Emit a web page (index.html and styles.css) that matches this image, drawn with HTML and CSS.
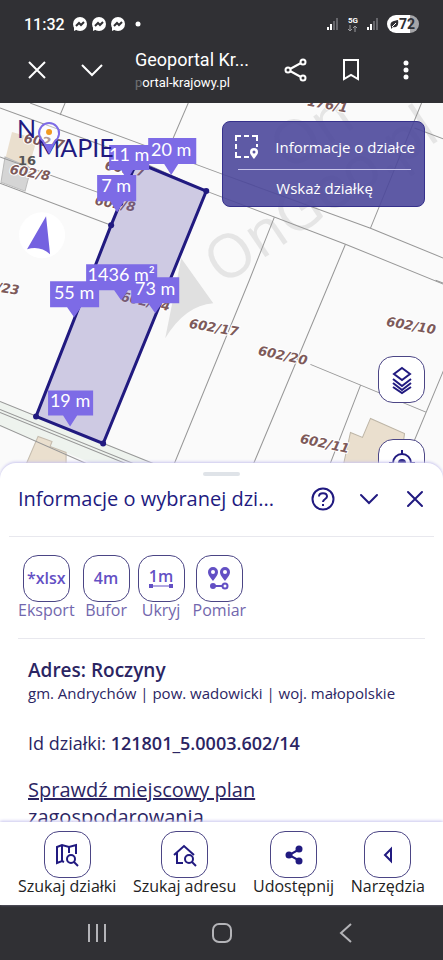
FILE: index.html
```
<!DOCTYPE html>
<html lang="pl">
<head>
  <meta charset="UTF-8">
  <meta name="viewport" content="width=device-width, initial-scale=1.0">
  <title>Geoportal Krajowy</title>
  <link rel="stylesheet" href="styles.css">
</head>
<body>
  <header class="top">
    <div class="status">
      <span class="clock">11:32</span>
      <svg class="chats" width="102" height="16" viewBox="0 0 102 16">
        <g fill="#fff">
          <circle cx="7" cy="8" r="7"/><path d="M1 11v4l4-2z"/>
          <circle cx="26" cy="8" r="7"/><path d="M20 11v4l4-2z"/>
          <circle cx="45" cy="8" r="7"/><path d="M39 11v4l4-2z"/>
          <circle cx="65" cy="8" r="2.500"/>
        </g>
        <g fill="none" stroke="#303034" stroke-width="2">
          <path d="M3 10l3-3 2 2 3-3"/><path d="M22 10l3-3 2 2 3-3"/><path d="M41 10l3-3 2 2 3-3"/>
        </g>
      </svg>
      <svg class="signal" width="12" height="14" viewBox="0 0 12 14">
        <path d="M1 10v3M4 7v6" stroke="#fff" stroke-width="2"/>
        <path d="M7 4v9M10 1v12" stroke="#66666b" stroke-width="2"/>
      </svg>
      <span class="net">5G<svg width="12" height="7" viewBox="0 0 12 7"><path d="M3 0v6M1 4l2 2 2-2M8 7V1M6 3l2-2 2 2" fill="none" stroke="#99999d"/></svg></span>
      <svg class="signal" width="12" height="14" viewBox="0 0 12 14">
        <path d="M1 10v3M4 7v6" stroke="#fff" stroke-width="2"/>
        <path d="M7 4v9M10 1v12" stroke="#66666b" stroke-width="2"/>
      </svg>
      <span class="battery"><svg width="9" height="10" viewBox="0 0 9 10"><path d="M1 8C-1 3 3 2 8 1c1 5-1 8-5 7L1 10z" fill="#303034"/><path d="M2 8l4-4" stroke="#fff"/></svg>72</span>
    </div>
    <div class="browser">
      <button class="plain" aria-label="Zamknij kartę"><svg width="24" height="24" viewBox="0 0 24 24"><path d="M4 4l16 16M20 4L4 20" stroke="#fff" stroke-width="2"/></svg></button>
      <button class="plain" aria-label="Zwiń kartę"><svg width="24" height="24" viewBox="0 0 24 24"><path d="M2 7l10 10L22 7" fill="none" stroke="#fff" stroke-width="2"/></svg></button>
      <div class="site">
        <div class="site-title">Geoportal Kr...</div>
        <div class="site-url"><span>p</span>ortal-krajowy.pl</div>
      </div>
      <button class="plain" aria-label="Udostępnij stronę"><svg width="24" height="24" viewBox="0 0 24 24" fill="none" stroke="#fff" stroke-width="2"><path d="M6 11l11-6M6 13l11 6"/><circle cx="4" cy="12" r="2.500"/><circle cx="19" cy="4" r="2.500"/><circle cx="19" cy="20" r="2.500"/></svg></button>
      <button class="plain" aria-label="Zakładka"><svg width="24" height="24" viewBox="0 0 24 24"><path d="M5 2h14v19l-7-4-7 4z" fill="none" stroke="#fff" stroke-width="2"/></svg></button>
      <button class="plain" aria-label="Menu"><svg width="24" height="24" viewBox="0 0 24 24" fill="#fff"><circle cx="12" cy="5" r="2.500"/><circle cx="12" cy="12" r="2.500"/><circle cx="12" cy="19" r="2.500"/></svg></button>
    </div>
  </header>

  <main class="map">
    <svg class="map-canvas" viewBox="0 103 443 375" preserveAspectRatio="xMinYMin slice">
      <rect y="103" width="443" height="375" fill="#fafafa"/>
      <!-- road -->
      <path d="M0 401L150 461L190 478H130L0 426z" fill="#eef3ee"/>
      <!-- watermark -->
      <g fill="#e0e0e0">
        <path d="M181 258L213 303Q185 305 165 338z"/>
        <text class="wm" x="222" y="286" font-size="60" transform="rotate(-34 222 286)">OnGeo.pl</text>
        <text class="wm" x="288" y="172" font-size="60" transform="rotate(-34 288 172)">On</text>
      </g>
      <!-- buildings -->
      <path d="M12 132L37 139L32 156L24 176L3 168z" fill="#eadfce"/>
      <path d="M5 157L31 168L25 191L1 182z" fill="#d5d5d5" stroke="#bbb"/>
      <path d="M20 478L38 436L52 441L50 446L66 452V478z" fill="#eadfce" stroke="#c5bcae"/>
      <path d="M340 478L350 432L362 437L370 418L404 433L398 478z" fill="#eadfce" stroke="#bdb5a6"/>
      <!-- parcel boundaries -->
      <g fill="none" stroke="#979797">
        <path d="M30 103L222 174L370 228L443 258M0 108L115 150L206 191L345 244L443 284M65 103L60 115M188 103L173 138M0 157L111 197M0 183L111 225"/>
        <path d="M274 217L249 280L168 478M345 244L330 280L247 478M421 103L370 228M414 128L443 139M435 280L443 283M310 364L426 412M443 370L398 478M360 385L324 478"/>
        <path d="M0 401L190 478M0 409L170 478M0 412L150 473M0 425L120 478"/>
      </g>
      <g class="parcel-no">
        <text x="24" y="138" transform="rotate(10 24 138)">602/7</text>
        <text x="10" y="169" transform="rotate(10 10 169)">602/8</text>
        <text x="105" y="165" transform="rotate(10 105 165)">602/7</text>
        <text x="95" y="200" transform="rotate(10 95 200)">602/8</text>
        <text x="-30" y="283" transform="rotate(8 -30 283)">602/23</text>
        <text x="121" y="296" transform="rotate(12 121 296)">602/14</text>
        <text x="189" y="323" transform="rotate(10 189 323)">602/17</text>
        <text x="258" y="350" transform="rotate(12 258 350)">602/20</text>
        <text x="386" y="321" transform="rotate(10 386 321)">602/10</text>
        <text x="300" y="438" transform="rotate(12 300 438)">602/11</text>
        <text x="307" y="101" transform="rotate(10 307 101)">176/1</text>
      </g>
      <text x="18" y="165" class="house-no">16</text>
      <!-- selected parcel -->
      <path d="M36 416L111 225L120 203L136 162L206 191L103 443z" fill="#6a5db0" fill-opacity=".3" stroke="#211a80" stroke-width="3"/>
      <g fill="#211a80">
        <circle cx="36" cy="416" r="3"/><circle cx="111" cy="225" r="3"/><circle cx="120" cy="203" r="3"/><circle cx="206" cy="191" r="3"/><circle cx="103" cy="443" r="3"/>
      </g>
      <!-- measurement labels -->
      <g fill="#7d6be6">
        <path d="M109 145H149V170H133L127 180L121 170H109z"/>
        <path d="M148 138H196V164H178L171 175L164 164H148z"/>
        <path d="M97 175H136V201H124L117 212L110 201H97z"/>
        <path d="M86 264H157V290H128L121 300L114 290H86z"/>
        <path d="M50 281H99V307H81L74 317L67 307H50z"/>
        <path d="M131 277H179V303H162L155 313L148 303H131z"/>
        <path d="M48 390H93V415H77L70 426L63 415H48z"/>
      </g>
      <g class="measure">
        <text x="129" y="161">11 m</text>
        <text x="171" y="156">20 m</text>
        <text x="116" y="192">7 m</text>
        <text x="121" y="281">1436 m²</text>
        <text x="74" y="299">55 m</text>
        <text x="155" y="295">73 m</text>
        <text x="70" y="407">19 m</text>
      </g>
      <!-- logo -->
      <g class="brand">
        <text x="17" y="138">N</text>
        <text x="37" y="157">MAPIE</text>
      </g>
      <path d="M49 152L43 141A10 10 0 1 1 55 141z" fill="#fff" fill-opacity=".4" stroke="#7d6be6" stroke-width="2"/>
      <path d="M44 144h10l-5 9z" fill="#7d6be6"/>
      <circle cx="49" cy="132" r="3" fill="#f39a1e"/>
      <!-- compass -->
      <circle cx="42" cy="235" r="23" fill="#fff"/>
      <path d="M46 216L50 254Q40 245 27 249z" fill="#7462e0"/>
    </svg>
    <div class="panel">
      <button class="panel-row">
        <svg width="26" height="26" viewBox="0 0 26 26"><path d="M2 7V2h5M10 2h5M18 2h5v5M2 10v5M2 18v5h5M10 23h5M23 10v3" fill="none" stroke="#fff" stroke-width="2"/><path d="M20 25C17 21 16 20 16 18a4 4 0 0 1 8 0c0 2-1 3-4 7z" fill="#fff"/><circle cx="20" cy="18" r="1.500" fill="#5b56a0"/></svg>
        Informacje o działce
      </button>
      <hr>
      <button class="panel-row">Wskaż działkę</button>
    </div>
    <div class="map-tools">
      <button class="tile" aria-label="Warstwy"><svg width="24" height="30" viewBox="0 0 24 30" fill="none" stroke="#211a80" stroke-width="2"><path d="M12 3l8 6-8 6-8-6z"/><path d="M3 14l9 7 9-7M3 18l9 7 9-7M3 22l9 6 9-6"/></svg></button>
      <button class="tile" aria-label="Moja lokalizacja"><svg width="26" height="26" viewBox="0 0 26 26"><circle cx="13" cy="13" r="9" fill="none" stroke="#211a80" stroke-width="2"/><circle cx="13" cy="13" r="4" fill="#211a80"/><path d="M13 0v5M13 21v5M0 13h5M21 13h5" stroke="#211a80" stroke-width="2"/></svg></button>
    </div>
  </main>

  <section class="sheet">
    <div class="grip"></div>
    <div class="sheet-head">
      <h1>Informacje o wybranej dzi...</h1>
      <button class="plain" aria-label="Pomoc"><svg width="24" height="24" viewBox="0 0 24 24" fill="none" stroke="#211a80" stroke-width="2"><circle cx="12" cy="12" r="10.500"/><path d="M8 9.500C8 5 16 5 16 9.500c0 2.500-4 2.500-4 5.500M12 17v2"/></svg></button>
      <button class="plain" aria-label="Zwiń"><svg width="24" height="24" viewBox="0 0 24 24"><path d="M4 8l8 8 8-8" fill="none" stroke="#211a80" stroke-width="2" stroke-linecap="round"/></svg></button>
      <button class="plain" aria-label="Zamknij"><svg width="24" height="24" viewBox="0 0 24 24"><path d="M5 5l14 14M19 5L5 19" stroke="#211a80" stroke-width="2" stroke-linecap="round"/></svg></button>
    </div>
    <div class="actions">
      <button class="action"><span class="tile">*xlsx</span>Eksport</button>
      <button class="action"><span class="tile">4m</span>Bufor</button>
      <button class="action"><span class="tile tile-stack">1m<svg width="24" height="5" viewBox="0 0 24 5"><path d="M2 2h20" stroke="#6350c4"/><path d="M0 0h4v4H0zM20 0h4v4h-4z" fill="#6350c4"/></svg></span>Ukryj</button>
      <button class="action"><span class="tile"><svg width="26" height="26" viewBox="0 0 26 26"><path d="M7 16C3 11 2 9 2 7a5 5 0 0 1 10 0c0 2-1 4-5 9zM19 16c-4-5-5-7-5-9a5 5 0 0 1 10 0c0 2-1 4-5 9z" fill="#6350c4"/><circle cx="7" cy="7" r="2" fill="#fff"/><circle cx="19" cy="7" r="2" fill="#fff"/><circle cx="7" cy="21" r="3" fill="#6350c4"/><path d="M8 21h9" stroke="#6350c4" stroke-width="2"/><circle cx="19" cy="21" r="2.500" fill="#fff" stroke="#6350c4" stroke-width="2"/></svg></span>Pomiar</button>
    </div>
    <div class="details">
      <h2>Adres: Roczyny</h2>
      <p class="region">gm. Andrychów | pow. wadowicki | woj. małopolskie</p>
      <p class="plot-id">Id działki: <b>121801_5.0003.602/14</b></p>
      <a class="plan" href="#">Sprawdź miejscowy plan<br>zagospodarowania</a>
    </div>
  </section>

  <nav class="tabs">
    <button class="action"><span class="tile"><svg width="26" height="26" viewBox="0 0 26 26" fill="none" stroke="#211a80" stroke-width="2"><path d="M10 20l-2-1-5 2V5l5-2 7 2 7-2v9M8 3v16M15 5v6"/><circle cx="17" cy="17" r="4"/><path d="M20 20l4 4"/></svg></span>Szukaj działki</button>
    <button class="action"><span class="tile"><svg width="26" height="26" viewBox="0 0 26 26" fill="none" stroke="#211a80" stroke-width="2"><path d="M2 13L12 4l10 9M5 11v10h6"/><circle cx="17" cy="17" r="4"/><path d="M20 20l4 4"/></svg></span>Szukaj adresu</button>
    <button class="action"><span class="tile"><svg width="26" height="26" viewBox="0 0 26 26"><path d="M19 7L8 13l11 6" fill="none" stroke="#211a80" stroke-width="2"/><g fill="#211a80"><circle cx="8" cy="13" r="3.500"/><circle cx="18" cy="7" r="3.500"/><circle cx="18" cy="19" r="3.500"/></g></svg></span>Udostępnij</button>
    <button class="action"><span class="tile"><svg width="26" height="26" viewBox="0 0 26 26"><path d="M16 7v12l-6-6z" fill="none" stroke="#211a80" stroke-width="2"/></svg></span>Narzędzia</button>
  </nav>

  <footer class="system">
    <button class="plain" aria-label="Ostatnie"><svg width="24" height="24" viewBox="0 0 24 24"><path d="M4 3v18M12 3v18M20 3v18" stroke="#b4b4b8" stroke-width="2"/></svg></button>
    <button class="plain" aria-label="Ekran główny"><svg width="24" height="24" viewBox="0 0 24 24"><rect x="3" y="3" width="18" height="18" rx="6" fill="none" stroke="#b4b4b8" stroke-width="2"/></svg></button>
    <button class="plain" aria-label="Wstecz"><svg width="24" height="24" viewBox="0 0 24 24"><path d="M17 3l-10 9 10 9" fill="none" stroke="#b4b4b8" stroke-width="2"/></svg></button>
  </footer>
</body>
</html>
```
FILE: styles.css
```
* {
  box-sizing: border-box;
}
body {
  margin: 0;
  height: 100vh;
  display: flex;
  flex-direction: column;
  overflow: hidden;
  font-family: "Open Sans", "Noto Sans", sans-serif;
  color: #2b2563;
  background: #fff;
}
button {
  font: inherit;
  color: inherit;
  background: none;
  border: none;
  padding: 0;
  cursor: pointer;
}
svg {
  display: block;
  flex: none;
}
h1, h2, p {
  margin: 0;
}
.plain {
  display: flex;
}

.top {
  background: #303034;
  color: #fff;
  font-family: "Roboto", sans-serif;
}
.status {
  display: flex;
  align-items: center;
  height: 48px;
  padding: 0 24px;
  gap: 8px;
}
.clock {
  font-size: 16px;
  font-weight: 500;
}
.chats {
  margin-right: auto;
}
.net {
  display: flex;
  flex-direction: column;
  align-items: center;
  font-size: 8px;
  line-height: 8px;
  font-weight: 700;
}
.battery {
  display: flex;
  align-items: center;
  height: 18px;
  padding: 0 4px 0 3px;
  border-radius: 9px;
  background: linear-gradient(to right, #fff 72%, #a5a5a8 72%);
  color: #303034;
  font-size: 14px;
  font-weight: 700;
}
.browser {
  display: flex;
  align-items: center;
  height: 55px;
  padding: 0 25px 12px;
  gap: 31px;
}
.site {
  flex: 1;
  min-width: 0;
  white-space: nowrap;
}
.site-title {
  font-size: 18px;
  line-height: 26px;
}
.site-url {
  font-size: 13px;
  line-height: 20px;
}
.site-url span {
  opacity: .3;
}

.map {
  position: relative;
  flex: 1 1 0;
  min-height: 0;
}
/* the map runs on a little behind the rounded corners of the sheet */
.map-canvas {
  width: 100%;
  height: calc(100% + 16px);
}
.wm {
  opacity: .8;
}
.parcel-no {
  font: italic bold 13px "DejaVu Sans", sans-serif;
  fill: #7d5a5a;
  stroke: #fff;
  stroke-width: 2px;
  paint-order: stroke;
}
.parcel-no text {
  dominant-baseline: central;
}
.house-no {
  font: bold 13px "DejaVu Sans", sans-serif;
  fill: #555;
}
.measure {
  font-family: "Lato", sans-serif;
  font-size: 18px;
  fill: #fff;
  text-anchor: middle;
}
.brand {
  font-family: "Lato", sans-serif;
  font-size: 25px;
  fill: #211a80;
}
.panel {
  position: absolute;
  top: 18px;
  right: 18px;
  padding: 3px 9px 0 11px;
  border: 1px solid #36318c;
  border-radius: 8px;
  background: rgba(76, 72, 155, .9);
  color: #fff;
  font-size: 15px;
}
.panel hr {
  margin: 0 4px;
  border: none;
  border-top: 1px solid #c9c6ea;
}
.panel-row {
  display: flex;
  align-items: center;
  justify-content: center;
  gap: 15px;
  width: 100%;
  height: 36px;
}
.panel-row:first-child {
  height: 44px;
}
.map-tools {
  position: absolute;
  top: 253px;
  right: 18px;
  display: flex;
  flex-direction: column;
  gap: 36px;
}

.tile {
  display: flex;
  align-items: center;
  justify-content: center;
  width: 47px;
  height: 47px;
  border: 1px solid #4b4585;
  border-radius: 15px;
  background: #fff;
}
.tile-stack {
  flex-direction: column;
}
.sheet {
  position: relative;
  flex: 1 1 0;
  min-height: 0;
  overflow: hidden;
  border-radius: 16px 16px 0 0;
  background: #fff;
  box-shadow: 0 -1px 3px #c9c5ee;
}
.grip {
  width: 37px;
  height: 4px;
  margin: 9px auto 0;
  border-radius: 2px;
  background: #dfe3e8;
}
.sheet-head {
  display: flex;
  align-items: center;
  gap: 22px;
  height: 61px;
  margin: 0 9px;
  padding: 0 7px 14px 9px;
  border-bottom: 1px solid #e8e8ee;
}
.sheet-head h1 {
  flex: 1;
  color: #211a80;
  font-size: 20px;
  font-weight: 500;
  white-space: nowrap;
}
.actions {
  display: flex;
  gap: 8px;
  margin: 0 18px;
  padding: 18px 0 20px;
  border-bottom: 1px solid #e8e8ee;
  color: #7267ad;
}
.action {
  display: flex;
  flex-direction: column;
  align-items: center;
  font-size: 16px;
  line-height: 16px;
}
.actions .tile {
  color: #6350c4;
  font-weight: 600;
}
.details {
  padding: 18px 28px;
}
.details h2 {
  font-size: 19px;
  font-weight: 600;
  line-height: 26px;
}
.region {
  font-size: 15px;
  line-height: 20px;
}
.plot-id {
  margin: 27px 0 20px;
  font-size: 18px;
  line-height: 26px;
}
.plot-id b {
  font-weight: 600;
}
.plan {
  color: inherit;
  font-size: 20px;
  line-height: 27px;
}

.tabs {
  position: relative;
  display: flex;
  justify-content: space-between;
  padding: 9px 18px;
  height: 83px;
  background: #fff;
  box-shadow: 0 -1px 3px #c9c5ee;
  color: #222;
}
.system {
  display: flex;
  align-items: center;
  justify-content: space-between;
  height: 55px;
  padding: 0 85px;
  background: #303034;
}
```
